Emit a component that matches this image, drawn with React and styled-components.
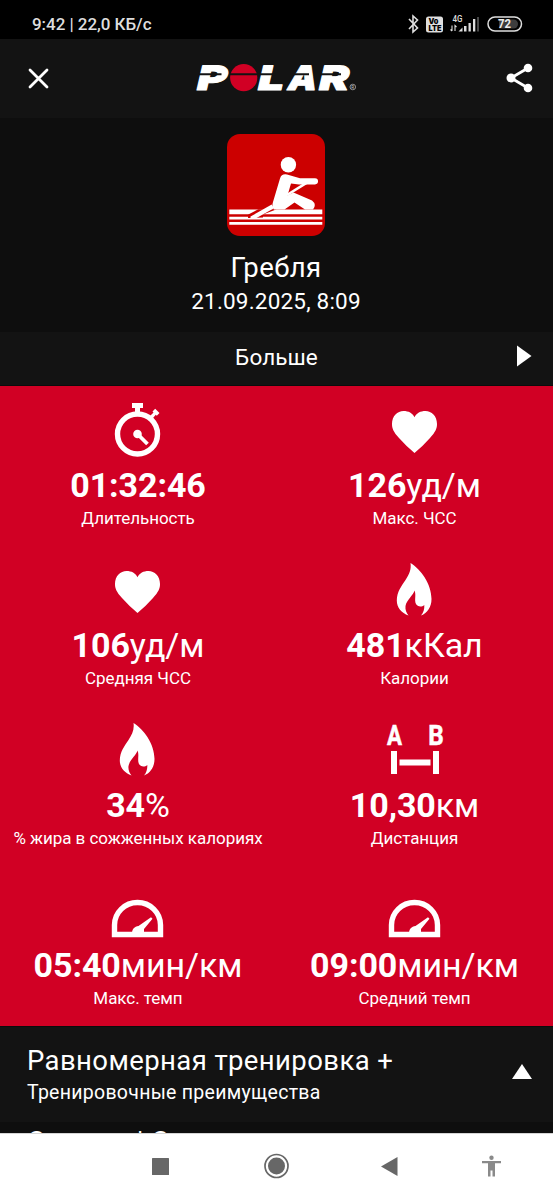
import React from "react";
import styled, { createGlobalStyle } from "styled-components";

const Global = createGlobalStyle`
  * { box-sizing: border-box; }
  body { margin: 0; background: #111; }
  svg { display: block; flex: none; }
`;

const Screen = styled.div`
  width: 553px;
  height: 1200px;
  overflow: hidden;
  display: flex;
  flex-direction: column;
  background: #0e0e0e;
  color: #fff;
  font-family: Roboto, "Noto Sans", sans-serif;
`;

const StatusBar = styled.div`
  height: 39px;
  flex: none;
  display: flex;
  align-items: flex-end;
  justify-content: space-between;
  padding: 0 30px 4px 32px;
  background: #000;
  color: #dedede;
`;

const StatusText = styled.div`
  padding-bottom: 1px;
  font-size: 17px;
  font-weight: 500;
  line-height: 20px;
  letter-spacing: -0.05px;
`;

const Header = styled.header`
  height: 79px;
  flex: none;
  display: flex;
  align-items: center;
  justify-content: space-between;
  padding: 0 20px 1px 28px;
  background: #131313;
`;

const Hero = styled.section`
  height: 214px;
  flex: none;
  display: flex;
  flex-direction: column;
  align-items: center;
  padding: 16px 1px 0 0;
`;

const Sport = styled.h1`
  margin: 16px 0 0;
  font-size: 27.5px;
  font-weight: 400;
  line-height: 32px;
  letter-spacing: 0.4px;
`;

const DateLine = styled.div`
  margin-top: 4px;
  font-size: 22.5px;
  line-height: 26px;
  letter-spacing: 0.2px;
`;

const MoreRow = styled.div`
  height: 54px;
  flex: none;
  display: grid;
  grid-template-columns: 36px 1fr 36px;
  align-items: center;
  text-align: center;
  background: #131313;
  border-bottom: 1px solid #0c0c0c;
  font-size: 22.5px;
  letter-spacing: 0.1px;
  padding-bottom: 3px;

  svg { margin-bottom: 2px; }
`;

const Stats = styled.section`
  height: 640px;
  flex: none;
  display: grid;
  grid-template-columns: 276px 277px;
  grid-auto-rows: 160px;
  background: #d10024;
`;

const Stat = styled.div`
  display: flex;
  flex-direction: column;
  align-items: center;
  padding-top: 16px;
  white-space: nowrap;
`;

const Value = styled.div`
  margin-top: 7px;
  font-size: 34px;
  line-height: 40px;
  letter-spacing: -0.08px;
  b { font-weight: 700; }
`;

const Label = styled.div`
  margin-top: 3px;
  font-size: 17px;
  line-height: 20px;
  letter-spacing: -0.04px;
`;

const Benefit = styled.section`
  height: 96px;
  flex: none;
  display: flex;
  align-items: center;
  justify-content: space-between;
  padding: 0 21px 0 27px;
  background: #131313;
  border-top: 1px solid #0c0c0c;

  svg { margin-bottom: 7px; }
`;

const Title = styled.div`
  font-size: 27.5px;
  line-height: 34px;
  letter-spacing: 0.4px;
  white-space: nowrap;
`;

const Subtitle = styled.div`
  font-size: 19.5px;
  line-height: 24px;
  margin-top: 3px;
  letter-spacing: 0.28px;
`;

const NextCard = styled.section`
  height: 11px;
  flex: none;
  overflow: hidden;
  padding: 3px 27px 0 27px;
`;

const NavBar = styled.nav`
  height: 67px;
  flex: none;
  display: flex;
  align-items: center;
  background: #fff;
  border-top: 1px solid #d5d5d5;
  padding: 0 0 2px 152px;
`;

const NavItem = styled.div`
  width: ${(p) => p.$w}px;
`;

const StatusIcons = () => (
  <svg width="117" height="22" viewBox="406 13 117 22">
    <path d="M409 19 L417.5 28 L413 32 V16 L417.5 20 L409 29" fill="none" stroke="#dedede" strokeWidth="1.6" />
    <rect x="426" y="16.500" width="17" height="16" rx="2.500" fill="#dedede" />
    <g fontFamily="Inter, sans-serif" fontWeight="900" fill="#000">
      <text x="428.500" y="23.800" fontSize="7.500" textLength="10" lengthAdjust="spacingAndGlyphs">Vo</text>
      <text x="428.500" y="31" fontSize="7.500" textLength="13" lengthAdjust="spacingAndGlyphs">LTE</text>
    </g>
    <text x="452.500" y="21.600" fontSize="8.500" fontWeight="500" fontFamily="Roboto, sans-serif" fill="#dedede" textLength="10" lengthAdjust="spacingAndGlyphs">4G</text>
    <path d="M452 25.500v5.500m-1.500-1.500l1.500 1.500M455 31v-5.500l1.500 1.500" fill="none" stroke="#dedede" strokeWidth="1.100" />
    <path d="M458.500 31.500l4-4v4zM464 31.500v-5.500h2.500v5.500zM468.500 31.500v-8.500h2.300v8.500zM473 31.500v-12.500h2.300v12.500z" fill="#dedede" />
    <path d="M477 17h2v14.500h-2z" fill="#484848" />
    <rect x="488" y="17" width="33.500" height="14" rx="7" fill="none" stroke="#dedede" strokeWidth="1.500" />
    <path d="M499 19.500h14.500a4.500 4.500 0 0 1 0 9H499z" fill="#3d3d3d" />
    <text x="498" y="28.300" fontSize="12.500" fontWeight="700" fontFamily="Roboto, sans-serif" fill="#eee" textLength="13" lengthAdjust="spacingAndGlyphs">72</text>
  </svg>
);

const LogoBox = styled.div`
  margin-right: 3px;
`;

const Logo = () => (
  <LogoBox>
    <svg width="164" height="32" viewBox="194 62 164 32" overflow="visible">
      <g fill="#fff" stroke="#fff" strokeWidth="1" strokeLinejoin="round" fontFamily="Inter, sans-serif" fontWeight="900" fontSize="33.500">
        <g transform="translate(195 89.500) skewX(-13)"><text textLength="30" lengthAdjust="spacingAndGlyphs">P</text></g>
        <g transform="translate(256 89.500) skewX(-13)"><text textLength="26" lengthAdjust="spacingAndGlyphs">L</text></g>
        <g transform="translate(286 89.500) skewX(-13)"><text textLength="29" lengthAdjust="spacingAndGlyphs">A</text></g>
        <g transform="translate(317 89.500) skewX(-13)"><text textLength="30" lengthAdjust="spacingAndGlyphs">R</text></g>
      </g>
      <circle cx="243.700" cy="77.700" r="13.600" fill="#d10024" />
      <path d="M198 74.200h23.500M230 74.200h27M258 74.200h18M292 74.200h17M320 74.200h21" stroke="#131313" strokeWidth="2" />
      <circle cx="352.800" cy="87" r="2.800" fill="none" stroke="#aaa" strokeWidth="0.800" />
      <text x="351.300" y="88.700" fontSize="4.500" fontFamily="Roboto, sans-serif" fill="#ccc">R</text>
    </svg>
  </LogoBox>
);

const Rower = () => (
  <svg width="98" height="102" viewBox="0 0 98 102">
    <rect width="98" height="102" rx="13" fill="#c00" />
    <path d="M2.300 75.500h93v4.700h-93zM2.300 82.800h93v2.700h-93zM2.300 88h93v2.800h-93z" fill="#fff" />
    <path d="M31.300 75.300L21.300 80.400L21 84L36 83.500V80.400L49.700 75.300z" fill="#c00" />
    <path d="M44.700 70.500L47 74.300L29.500 84H23.500V82.600z" fill="#fff" />
    <circle cx="61.400" cy="30.800" r="7.700" fill="#fff" />
    <path d="M53 44.500Q54.500 39.500 60 40.500L73 44.300H88a3 3 0 0 1 0 6.100H72L64 49.500L60.500 61.500L66.500 58.500L85 66.500Q90 70.500 86 75.500H78L67.500 68.500L57.500 75.500H47Q44.500 72 46 68z" fill="#fff" />
    <path d="M60 61L79.500 48.800" stroke="#fff" strokeWidth="2.600" />
  </svg>
);

const icons = {
  watch: (
    <>
      <circle cx="26.500" cy="32" r="20" fill="none" stroke="#fff" strokeWidth="5.400" />
      <path d="M21 1h11v5h-3v6h-5V6h-3zM39 14l3.500-3.500-1-1 2.700-2.700 4.300 4.300-2.700 2.700-1-1-3 3.500z" fill="#fff" />
      <circle cx="26.500" cy="32" r="4.300" fill="#fff" />
      <path d="M26.500 32L36.500 42" stroke="#fff" strokeWidth="3.800" />
    </>
  ),
  heart: (
    <path d="M26.500 51Q19 45 11 36C5.500 30 4 26.500 4 22C4 14 9.500 9 15.500 9C20.500 9 24.500 11 26.500 15.300C28.500 11 32.500 9 37.500 9C43.500 9 49 14 49 22C49 26.500 47.500 30 42 36Q34 45 26.500 51z" fill="#fff" />
  ),
  flame: (
    <path d="M22.500 1C33 7.500 43.500 22 43.500 37C43.500 45 39.500 51 33 53.500C35.500 50.500 36.500 47 36.300 43C33.500 45.500 29.500 44.800 28 42C26 38 28.500 33 26.500 28.500C25.500 33 18.500 38 17.500 44C17 48 18.500 51 20.500 53.500C13.500 51 8.800 45.500 8.800 38.500C8.800 30 13.500 24 17.500 18C21 12.500 23.500 8 22.500 1z" fill="#fff" />
  ),
  distance: (
    <>
      <g fill="#fff" stroke="#fff" strokeWidth="0.500" fontFamily="Roboto, sans-serif" fontWeight="700" fontSize="27">
        <text x="-1" y="23" textLength="15" lengthAdjust="spacingAndGlyphs">A</text>
        <text x="40.300" y="23" textLength="15.500" lengthAdjust="spacingAndGlyphs">B</text>
      </g>
      <path d="M3 29h6v23h-6zM45 29h6v23h-6zM11.500 37.500h31v6h-31z" fill="#fff" />
    </>
  ),
  gauge: (
    <>
      <path d="M3.500 52.500V43a23 22.500 0 0 1 46 0V52.500z" fill="none" stroke="#fff" strokeWidth="5.400" />
      <path d="M21 51.500C21 47 23.500 44.500 27.500 44L40 35.300L41.500 36.800L33 47V52z" fill="#fff" />
    </>
  ),
};

const StatIcon = ({ name }) => (
  <svg width="54" height="56" viewBox="0 0 54 56" overflow="visible">{icons[name]}</svg>
);

const stats = [
  ["watch", "01:32:46", "", "Длительность"],
  ["heart", "126", "уд/м", "Макс. ЧСС"],
  ["heart", "106", "уд/м", "Средняя ЧСС"],
  ["flame", "481", "кКал", "Калории"],
  ["flame", "34", "%", "% жира в сожженных калориях"],
  ["distance", "10,30", "км", "Дистанция"],
  ["gauge", "05:40", "мин/км", "Макс. темп"],
  ["gauge", "09:00", "мин/км", "Средний темп"],
];

export default function App() {
  return (
    <Screen>
      <Global />
      <StatusBar>
        <StatusText>9:42 | 22,0 КБ/с</StatusText>
        <StatusIcons />
      </StatusBar>
      <Header>
        <svg width="21" height="21" viewBox="0 0 21 21">
          <path d="M2 2L19 19M19 2L2 19" stroke="#fff" strokeWidth="2.800" strokeLinecap="round" />
        </svg>
        <Logo />
        <svg width="27" height="30" viewBox="0 0 27 30">
          <path d="M22 5L5 15L22 25" fill="none" stroke="#fff" strokeWidth="2.800" />
          <circle cx="22" cy="5" r="4.300" fill="#fff" />
          <circle cx="5" cy="15" r="4.500" fill="#fff" />
          <circle cx="22" cy="25" r="4.300" fill="#fff" />
        </svg>
      </Header>
      <Hero>
        <Rower />
        <Sport>Гребля</Sport>
        <DateLine>21.09.2025, 8:09</DateLine>
      </Hero>
      <MoreRow>
        <span />
        <span>Больше</span>
        <svg width="15" height="22" viewBox="0 0 15 22">
          <path d="M0 0.500L14.500 11L0 21.500z" fill="#fff" />
        </svg>
      </MoreRow>
      <Stats>
        {stats.map(([icon, value, unit, label]) => (
          <Stat key={label}>
            <StatIcon name={icon} />
            <Value><b>{value}</b>{unit}</Value>
            <Label>{label}</Label>
          </Stat>
        ))}
      </Stats>
      <Benefit>
        <div>
          <Title>Равномерная тренировка +</Title>
          <Subtitle>Тренировочные преимущества</Subtitle>
        </div>
        <svg width="20" height="15" viewBox="0 0 20 15">
          <path d="M10 0L20 15H0z" fill="#fff" />
        </svg>
      </Benefit>
      <NextCard>
        <Title>Скорост| С</Title>
      </NextCard>
      <NavBar>
        <NavItem $w={112}>
          <svg width="17" height="17"><rect width="17" height="17" rx="0.500" fill="#676767" /></svg>
        </NavItem>
        <NavItem $w={117}>
          <svg width="26" height="26">
            <circle cx="12.500" cy="13" r="11.500" fill="none" stroke="#676767" strokeWidth="1.700" />
            <circle cx="12.500" cy="13" r="8.500" fill="#676767" />
          </svg>
        </NavItem>
        <NavItem $w={101}>
          <svg width="17" height="19"><path d="M0 9.500L16.500 0V19z" fill="#676767" /></svg>
        </NavItem>
        <NavItem $w={20}>
          <svg width="20" height="22">
            <circle cx="9.500" cy="2.800" r="2.200" fill="#8a8a8a" />
            <path d="M0 6h19v2.300h-6V21.500h-2.500v-6h-2v6H6V8.300H0z" fill="#8a8a8a" />
          </svg>
        </NavItem>
      </NavBar>
    </Screen>
  );
}
